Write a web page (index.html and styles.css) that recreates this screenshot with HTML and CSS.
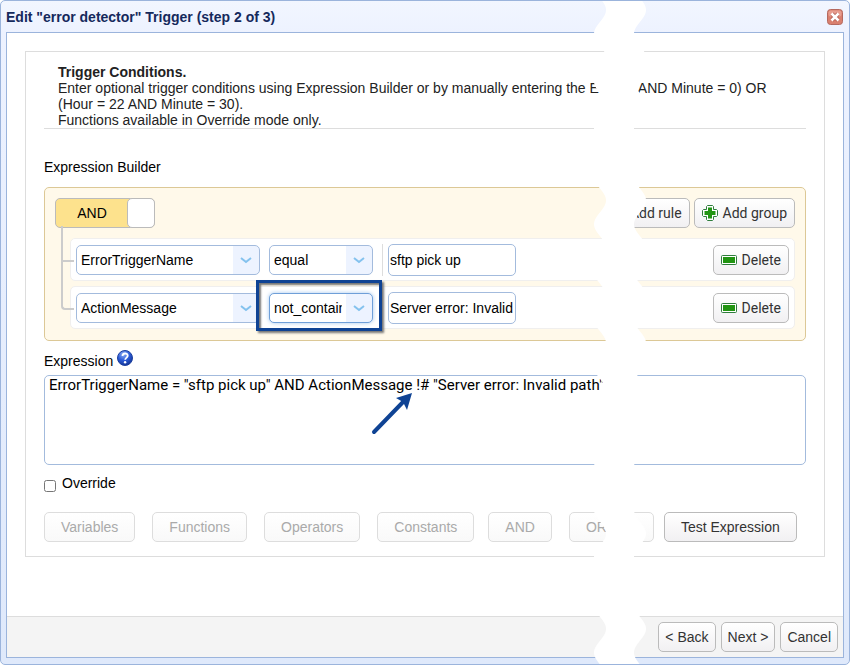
FILE: index.html
```
<!DOCTYPE html>
<html lang="en">
<head>
  <meta charset="UTF-8">
  <title>Edit Trigger</title>
  <meta name="viewport" content="width=device-width, initial-scale=1">
  <link rel="stylesheet" href="styles.css">
</head>
<body>
<div class="window">
  <header class="titlebar">
    <h1>Edit "error detector" Trigger (step 2 of 3)</h1>
    <button type="button" class="close" aria-label="Close">
      <svg width="16" height="16" viewBox="0 0 16 16">
        <rect x="0.5" y="0.5" width="15" height="15" rx="3" fill="#d9806f" stroke="#b5695f"/>
        <rect x="1.5" y="1.5" width="13" height="6" rx="2" fill="#e79d8f"/>
        <path d="M5 5l6 6M11 5l-6 6" stroke="#b0564a" stroke-width="4"/>
        <path d="M4.5 4.5l7 7M11.5 4.5l-7 7" stroke="#fff" stroke-width="2.6"/>
      </svg>
    </button>
  </header>

  <form class="content">
    <div class="panel">
      <div class="intro">
        <b>Trigger Conditions.</b><br>
        Enter optional trigger conditions using Expression Builder or by manually entering the E<span class="cut">AND Minute = 0) OR</span><br>
        (Hour = 22 AND Minute = 30).<br>
        Functions available in Override mode only.
      </div>

      <h2>Expression Builder</h2>
      <div class="builder">
        <div class="group-bar">
          <button type="button" class="toggle"><span class="toggle-label">AND</span><span class="toggle-knob"></span></button>
          <div class="group-actions">
            <button type="button" class="btn icon-btn">Add rule</button>
            <button type="button" class="btn icon-btn">
              <svg width="16" height="16" viewBox="0 0 16 16"><path class="icon-edge" d="M5.5.5h5l1 1v3h3l1 1v5l-1 1h-3v3l-1 1h-5l-1-1v-3h-3l-1-1v-5l1-1h3v-3z"/><path class="icon-fill" d="M6 2.5h4v3.5h3.5v4h-3.5v3.5h-4v-3.5h-3.5v-4h3.5z"/></svg>
              Add group
            </button>
          </div>
        </div>

        <div class="rule">
          <select class="field" aria-label="Variable"><option>ErrorTriggerName</option></select>
          <div class="op"><select aria-label="Operator"><option>equal</option></select></div>
          <div class="value"><input type="text" aria-label="Value" value="sftp pick up"></div>
          <button type="button" class="btn icon-btn">
            <svg width="16" height="16" viewBox="0 0 16 16"><rect class="icon-edge" x="0.5" y="3.5" width="15" height="9" rx="1"/><rect class="icon-fill" x="2" y="5" width="12" height="6"/></svg>
            Delete
          </button>
        </div>
        <div class="rule">
          <select class="field" aria-label="Variable"><option>ActionMessage</option></select>
          <div class="op marked"><select aria-label="Operator"><option>not_contains</option></select></div>
          <div class="value"><input type="text" aria-label="Value" value="Server error: Invalid path"></div>
          <button type="button" class="btn icon-btn">
            <svg width="16" height="16" viewBox="0 0 16 16"><rect class="icon-edge" x="0.5" y="3.5" width="15" height="9" rx="1"/><rect class="icon-fill" x="2" y="5" width="12" height="6"/></svg>
            Delete
          </button>
        </div>
      </div>

      <div class="expr-label">
        <label for="expression">Expression</label>
        <svg width="16" height="16" viewBox="0 0 16 16">
          <defs>
            <radialGradient id="ball" cx="0.4" cy="0.25" r="0.8">
              <stop offset="0" stop-color="#8fb0f5"/>
              <stop offset="0.5" stop-color="#2c5bd8"/>
              <stop offset="1" stop-color="#10318f"/>
            </radialGradient>
          </defs>
          <circle cx="8" cy="8" r="7.5" fill="url(#ball)" stroke="#1c3f9f"/>
          <path d="M5.5 6c0-3.3 5.2-3.3 5.2-.2 0 1.7-2.5 1.9-2.5 4" fill="none" stroke="#fff" stroke-width="1.8"/>
          <circle cx="8.1" cy="12.2" r="1.2" fill="#fff"/>
        </svg>
      </div>
      <div class="expr">
        <textarea id="expression">ErrorTriggerName = "sftp pick up" AND ActionMessage !# "Server error: Invalid path"</textarea>
        <svg class="arrow" width="44" height="46" viewBox="0 0 44 46">
          <path d="M3 40L33 9" stroke="#0f4394" stroke-width="4" stroke-linecap="round"/>
          <path d="M41 1L25 6L32 10L36 18z" fill="#0f4394"/>
        </svg>
      </div>

      <div class="override">
        <input type="checkbox" id="override">
        <label for="override">Override</label>
      </div>

      <div class="tools">
        <div class="inserts">
          <button type="button" class="btn" disabled>Variables</button>
          <button type="button" class="btn" disabled>Functions</button>
          <button type="button" class="btn" disabled>Operators</button>
          <button type="button" class="btn" disabled>Constants</button>
        </div>
        <div class="inserts logic">
          <button type="button" class="btn" disabled>AND</button>
          <button type="button" class="btn wide" disabled>OR</button>
        </div>
        <button type="button" class="btn">Test Expression</button>
      </div>
    </div>

    <footer class="footer">
      <button type="button" class="btn">&lt; Back</button>
      <button type="button" class="btn">Next &gt;</button>
      <button type="button" class="btn">Cancel</button>
    </footer>
  </form>

  <!-- wavy tear across the dialog -->
  <svg class="tear" width="52" height="665" viewBox="0 0 52 665">
    <path fill="#fff" d=""/>
  </svg>
</div>

<script>
  // Build the tear: two parallel waves, 40px apart
  const half = 23.8;
  const left = [], right = [];
  for (let y = 0; y <= 665; y++) {
    const x = 6 + 6 * Math.cos((y - 10) * Math.PI / half);
    left.push(x.toFixed(2) + ',' + y);
    right.unshift((x + 40).toFixed(2) + ',' + y);
  }
  document.querySelector('.tear path').setAttribute('d', 'M' + left.concat(right).join('L') + 'z');
</script>
</body>
</html>
```
FILE: styles.css
```
* {
  box-sizing: border-box;
}
body {
  margin: 0;
  background: #fff;
  font: 14px/16px "Liberation Sans", Arial, sans-serif;
  color: #000;
}
h1, h2 {
  margin: 0;
  font-size: 14px;
}
button, input, select, textarea {
  font: inherit;
  color: inherit;
}
.window {
  position: relative;
  display: flex;
  flex-direction: column;
  min-height: 100vh;
  padding: 0 5px 6px;
  border: 1px solid #9bb4dc;
  border-radius: 5px;
  background: linear-gradient(#f2f6ff, #edf2ff 32px, #dfe9fb);
  overflow: hidden;
}
.titlebar {
  display: flex;
  align-items: center;
  justify-content: space-between;
  height: 31px;
}
h1 {
  color: #15295c;
}
.close {
  display: flex;
  margin-right: 1px;
  padding: 0;
  border: 0;
  background: none;
}
.content {
  display: flex;
  flex: 1;
  flex-direction: column;
  justify-content: space-between;
  border: 1px solid #9bb4dc;
  background: #fff;
}
.panel {
  margin: 18px;
  padding: 12px 18px 14px;
  border: 1px solid #ddd;
}
.intro {
  padding-left: 14px;
  border-bottom: 1px solid #ddd;
  color: #222;
  white-space: nowrap;
}
.cut {
  margin-left: 39px;
}
h2 {
  margin: 30px 0 12px;
  font-weight: normal;
}

/* expression builder */
.builder {
  display: flex;
  flex-direction: column;
  gap: 5px;
  padding: 10px 10px 11px;
  border: 1px solid #dcc896;
  border-radius: 5px;
  background: #fff9ea;
}
.group-bar {
  display: flex;
  justify-content: space-between;
  margin-bottom: 5px;
}
.group-actions {
  display: flex;
  gap: 4px;
}
.toggle {
  display: flex;
  width: 100px;
  height: 30px;
  padding: 0;
  border: 1px solid #bbb;
  border-radius: 5px;
  background: #fde28d;
}
.toggle-label {
  flex: 1;
  line-height: 28px;
}
.toggle-knob {
  width: 28px;
  height: 30px;
  margin: -1px;
  border: 1px solid #bbb;
  border-radius: 5px;
  background: #fff;
}
.rule {
  position: relative;
  display: flex;
  align-items: center;
  height: 43px;
  margin-left: 15px;
  padding: 0 5px;
  border: 1px solid #f0efee;
  border-radius: 5px;
  background: #fff;
}
/* tree lines from the AND switch down to each rule */
.rule::before {
  content: "";
  position: absolute;
  left: -10px;
  bottom: 18px;
  width: 11px;
  height: 48px;
  border: solid #ccc;
  border-width: 0 0 2px 2px;
}
.rule:nth-child(2)::before {
  height: 34px;
}
.rule:last-child::before {
  border-bottom-left-radius: 4px;
}
select {
  height: 30px;
  padding: 0 30px 0 4px;
  border: 1px solid #a3bbdd;
  border-radius: 5px;
  appearance: none;
  background: url("data:image/svg+xml,%3Csvg xmlns='http://www.w3.org/2000/svg' width='26' height='28'%3E%3Cpath fill='%23edf3ff' d='M0 0h26v28H0z'/%3E%3Cpath d='M8 12l5 4 5-4' fill='none' stroke='%2384c2ee' stroke-width='2'/%3E%3C/svg%3E") right / 26px 28px no-repeat #fff;
}
.field {
  width: 184px;
}
.op {
  position: relative;
  margin-left: 9px;
}
.op select {
  display: block;
  width: 104px;
  text-overflow: clip;
}
.marked select {
  border-color: #6f9fd8;
  box-shadow: 0 0 4px #a5c8ee;
}
.marked::after {
  content: "";
  position: absolute;
  inset: -13px -9px -8px -13px;
  border: 3px solid #0f4394;
  box-shadow: 2px 2px 2px #777, inset 2px 2px 2px #777;
  pointer-events: none;
}
.value {
  margin-left: 9px;
  padding-left: 5px;
  border-left: 1px solid #ddd;
}
.value input {
  display: block;
  width: 128px;
  height: 32px;
  padding: 0 1px;
  border: 1px solid #a3bbdd;
  border-radius: 5px;
}
.rule .btn {
  margin-left: auto;
}

/* buttons */
.btn {
  height: 30px;
  padding: 0 16px;
  border: 1px solid #bbb;
  border-radius: 5px;
  background: linear-gradient(#fff, #f1f0f2);
  color: #333;
  white-space: nowrap;
}
.btn:disabled {
  border-color: #ddd;
  background: linear-gradient(#fff, #f9f9f9);
  color: #aaa;
}
.icon-btn {
  display: flex;
  align-items: center;
  gap: 5px;
  padding: 0 7px;
  font-family: Roboto, sans-serif;
}
.icon-edge {
  fill: #fff;
  stroke: #2e7d3c;
}
.icon-fill {
  fill: #219512;
}

.expr-label {
  display: flex;
  gap: 4px;
  align-items: flex-start;
  margin: 9px 0 6px;
}
.expr-label label {
  padding-top: 3px;
}
.expr {
  position: relative;
}
textarea {
  display: block;
  width: 100%;
  height: 90px;
  padding: 1px 4px;
  border: 1px solid #a3bbdd;
  border-radius: 5px;
  font-family: Roboto, sans-serif;
  font-size: 15px;
  resize: none;
}
.arrow {
  position: absolute;
  left: 327px;
  top: 17px;
}
.override {
  display: flex;
  align-items: flex-start;
  gap: 6px;
  margin: 10px 0 20px;
}
.override input {
  width: 12px;
  height: 12px;
  margin: 5px 0 0;
}
.tools {
  display: flex;
  gap: 10px;
}
.inserts {
  display: flex;
  gap: 17px;
}
.logic {
  margin-left: 4px;
}
.wide {
  width: 85px;
  text-align: left;
}
.footer {
  display: flex;
  justify-content: flex-end;
  gap: 5px;
  padding: 5px;
  border-top: 1px solid #ddd;
  background: #f4f4f4;
}
.footer .btn {
  padding: 0 6px;
}
.tear {
  position: absolute;
  left: 593px;
  top: -1px;
  pointer-events: none;
}
```
